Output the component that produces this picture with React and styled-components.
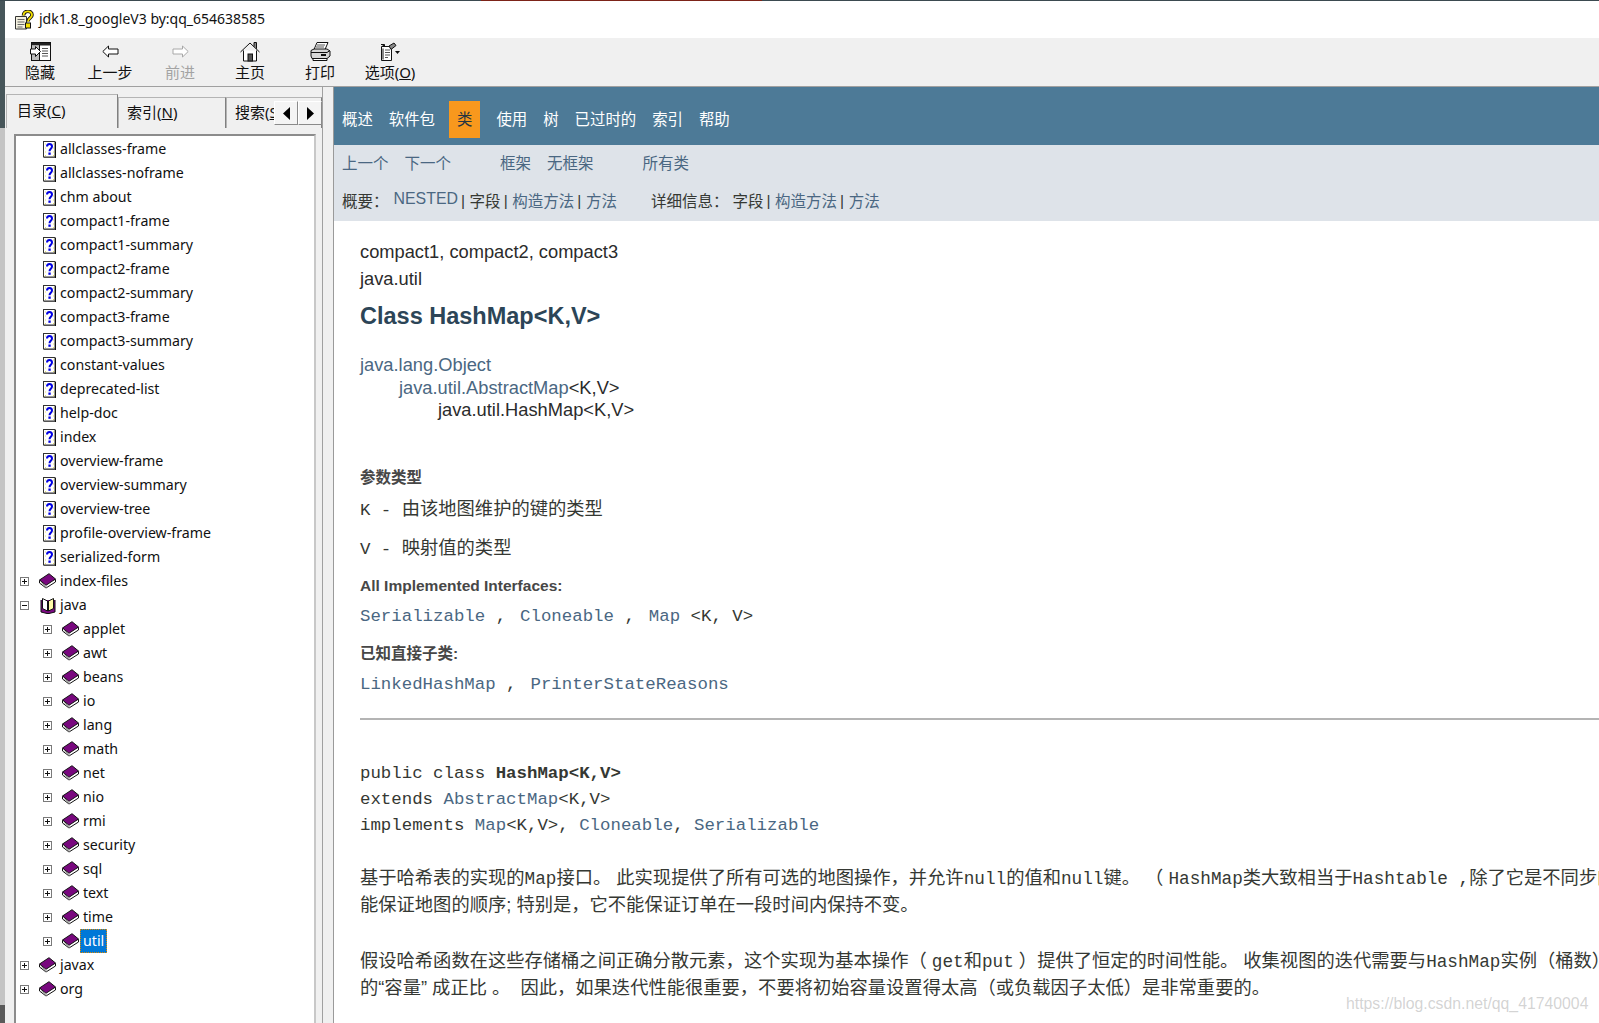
import React from 'react';
import styled, { createGlobalStyle } from 'styled-components';

const CJK = '"Noto Sans CJK SC"';

const GlobalStyle = createGlobalStyle`
  html, body {
    margin: 0;
    padding: 0;
    height: 100%;
    overflow: hidden;
  }
  body {
    font-family: "Noto Sans", ${CJK}, sans-serif;
    background: linear-gradient(to bottom, #47565a 0, #47565a 128px, #c4c4c4 128px, #c4c4c4 1005px, #5a5a5a 1005px);
  }
`;

const Page = styled.div`
  position: relative;
  width: 1599px;
  height: 1023px;
  padding-left: 5px;
  box-sizing: border-box;
  overflow: hidden;
  display: flex;
  flex-direction: column;
`;

const TopStrip = styled.div`
  height: 1px;
  flex: none;
  margin-left: -5px;
  background: linear-gradient(to right, #3b4a50 0, #3b4a50 481px, #7c2318 481px, #7c2318 762px, #3b4a50 762px);
`;

const TitleBar = styled.div`
  height: 37px;
  flex: none;
  display: flex;
  align-items: center;
  padding-left: 9px;
  background: #fff;
  font-size: 14px;
  color: #111;
`;

const TitleText = styled.span`
  margin: 0 0 3px 5px;
`;

const Toolbar = styled.div`
  height: 48px;
  flex: none;
  display: flex;
  padding-top: 3px;
  box-sizing: border-box;
  background: #f0f0f0;
`;

const ToolButton = styled.div`
  width: 70px;
  display: flex;
  flex-direction: column;
  align-items: center;
  color: ${(p) => (p.$disabled ? '#a3a3a3' : '#111')};
  font-size: 15px;
  line-height: 20px;
  white-space: nowrap;

  & > svg {
    height: 21px;
    flex: none;
  }
`;

const Divider = styled.div`
  height: 1px;
  flex: none;
  background: #a0a0a0;
`;

const Main = styled.div`
  flex: 1;
  min-height: 0;
  display: flex;
`;

const SidePane = styled.div`
  position: relative;
  width: 318px;
  flex: none;
  display: flex;
  flex-direction: column;
  background: #f0f0f0;
  padding: 7px 0 0 1px;
  box-sizing: border-box;
  border-right: 1px solid #a0a0a0;
`;

const TabStrip = styled.div`
  height: 34px;
  flex: none;
  display: flex;
  align-items: flex-end;
  overflow: hidden;
`;

const Tab = styled.div`
  width: ${(p) => p.$width}px;
  height: ${(p) => (p.$active ? 34 : 31)}px;
  flex: none;
  box-sizing: border-box;
  padding-left: ${(p) => (p.$active ? 10 : 8)}px;
  line-height: ${(p) => (p.$active ? 31 : 29)}px;
  font-size: 15px;
  color: #111;
  white-space: nowrap;
  overflow: hidden;
  border: 1px solid #b4b4b4;
  border-bottom: none;
  background: #f0f0f0;
  border-right: 1px solid #808080;
`;

const ScrollButtons = styled.div`
  position: absolute;
  left: 269px;
  top: 14px;
  display: flex;
`;

const ScrollButton = styled.div`
  width: 24px;
  height: 24px;
  box-sizing: border-box;
  display: flex;
  align-items: center;
  justify-content: center;
  background: #f4f4f4;
  border-right: 1px solid #8a8a8a;
  border-bottom: 1px solid #8a8a8a;
  border-top: 1px solid #fff;
  border-left: 1px solid #fff;
`;

const TreeBox = styled.div`
  flex: 1;
  min-height: 0;
  margin: 6px 6px 0 8px;
  background: #fff;
  border: 2px solid #8c8c8c;
  border-right-color: #c8c8c8;
  border-bottom: none;
  padding-top: 1px;
  overflow: hidden;
`;

const Row = styled.div`
  height: 24px;
  display: flex;
  align-items: center;
  padding-left: ${(p) => 4 + p.$depth * 23}px;
  font-size: 14.2px;
  color: #111;
`;

const Expander = styled.span`
  width: 7px;
  height: 7px;
  flex: none;
  margin-right: 10px;
  border: 1px solid #7a7a7a;
  display: flex;
  align-items: center;
  justify-content: center;
`;

const ExpanderSpacer = styled.span`
  width: 9px;
  flex: none;
  margin-right: 10px;
`;

const IconSlot = styled.span`
  width: 17px;
  height: 18px;
  flex: none;
  display: flex;
  align-items: center;
  justify-content: flex-end;
`;

const Label = styled.span`
  margin-left: 1px;
  padding: 0 2px;
  height: 24px;
  line-height: 22px;
  box-sizing: border-box;
  border: 1px dotted ${(p) => (p.$selected ? '#e08a00' : 'transparent')};
  background: ${(p) => (p.$selected ? '#0078d7' : 'transparent')};
  color: ${(p) => (p.$selected ? '#fff' : 'inherit')};
`;

const Splitter = styled.div`
  width: 10px;
  flex: none;
  background: #f0f0f0;
  border-right: 1px solid #9a9a9a;
`;

const Content = styled.div`
  flex: 1;
  min-width: 0;
  overflow: hidden;
  background: #fff;
  display: flex;
  flex-direction: column;
`;

const NavBar = styled.div`
  height: 58px;
  flex: none;
  display: flex;
  align-items: center;
  background: #4d7a97;
  padding-top: 6px;
  box-sizing: border-box;
  font-size: 15.4px;
  color: #fff;
`;

const NavItem = styled.div`
  height: 37px;
  line-height: 37px;
  padding: 0 8px;
  margin: ${(p) => (p.$active ? '0 8px 0 6px' : '0')};
  background: ${(p) => (p.$active ? '#f8981d' : 'transparent')};
  color: ${(p) => (p.$active ? '#253441' : '#fff')};
`;

const SubNav = styled.div`
  height: 76px;
  flex: none;
  background: #dee3e9;
  padding: 6px 0 0 8px;
  box-sizing: border-box;
  font-size: 15.5px;
  color: #4a6782;
`;

const SubRow = styled.div`
  height: 24px;
  line-height: 24px;
  display: flex;
  white-space: nowrap;
  margin-top: ${(p) => p.$top || 0}px;
`;

const SubLink = styled.span`
  margin-left: ${(p) => p.$left || 0}px;
  color: ${(p) => (p.$plain ? '#353833' : '#4a6782')};
`;

const Nested = styled(SubLink)`
  font-family: "Liberation Sans", sans-serif;
  font-size: 15.9px;
  position: relative;
  top: -2px;
`;

const Bar = styled.span`
  margin-left: 3px;
  margin-right: 4.6px;
  color: #353833;
  font-family: "Liberation Sans", sans-serif;
`;

const Article = styled.div`
  padding-left: 26px;
  color: #353833;
  font-family: "Liberation Sans", ${CJK}, sans-serif;
  white-space: nowrap;
`;

const SansLine = styled.div`
  font-size: 18.3px;
  line-height: 26.5px;
  margin-top: ${(p) => p.$top || 0}px;
  color: #2b2b2b;
`;

const ClassTitle = styled.h2`
  margin: 9px 0 0;
  font-size: 23.5px;
  line-height: 30px;
  font-weight: bold;
  color: #2c4557;
`;

const Ancestor = styled.div`
  font-size: 18.3px;
  line-height: 22.5px;
  margin-top: ${(p) => p.$top || 0}px;
  padding-left: ${(p) => p.$indent || 0}px;
  color: ${(p) => (p.$link ? '#4a6782' : '#2b2b2b')};

  & > span {
    color: #2b2b2b;
  }
`;

const Heading = styled.div`
  font-size: 15.5px;
  font-weight: bold;
  line-height: 20px;
  margin-top: ${(p) => p.$top || 0}px;
  color: #474747;
`;

const ParamLine = styled.div`
  font-size: 18.3px;
  line-height: 24px;
  margin-top: ${(p) => p.$top || 0}px;
  color: #353833;
`;

const Code = styled.span`
  font-family: "Liberation Mono", monospace;
  font-size: ${(p) => p.$size || 17.4}px;
  font-weight: ${(p) => (p.$bold ? 'bold' : 'normal')};
  margin-left: ${(p) => p.$gap || 0}px;
  color: ${(p) => (p.$link ? '#4a6782' : '#353833')};
  white-space: pre;
`;

const CodeLine = styled.div`
  font-family: "Liberation Mono", monospace;
  font-size: 17.4px;
  line-height: ${(p) => p.$height || 20}px;
  margin-top: ${(p) => p.$top || 0}px;
  white-space: pre;
`;

const Rule = styled.div`
  height: 2px;
  margin-top: 23px;
  background: #b4b4b4;
`;

const Paragraph = styled.div`
  margin-top: ${(p) => p.$top}px;
  font-size: 18.3px;
  line-height: 26.5px;
  color: #353833;
`;

const Watermark = styled.div`
  position: absolute;
  left: 1346px;
  top: 993px;
  font-family: "Liberation Sans", sans-serif;
  font-size: 15.8px;
  line-height: 22px;
  color: rgba(150, 150, 150, 0.42);
  white-space: nowrap;
`;

const DocIcon = () => (
  <svg width="13" height="17" viewBox="0 0 13 17">
    <rect x="0.5" y="0.5" width="11.5" height="15.5" fill="#fff" stroke="#333" />
    <path d="M12.5 1v16H1" fill="none" stroke="#111" />
    <path d="M2 3h.6M2 7h.6M2 11h.6M2 14.5h.6M10 3h.6M10 7h.6M10 11h.6M10 14.5h.6" stroke="#d8c800" />
    <path d="M4 5.500c0-3.400 5-3.400 5 0 0 2.300-2.500 2.200-2.500 4.800" fill="none" stroke="#0000e0" strokeWidth="2" />
    <rect x="5.400" y="11.500" width="2.300" height="2.300" fill="#0000e0" />
  </svg>
);

const BookIcon = () => (
  <svg width="17" height="16" viewBox="0 0 17 16">
    <path d="M.5 7.500V10L7 15l9.500-6V6.500z" fill="#fff" stroke="#111" />
    <path d="M.5 7 10 .7l6.500 5.300L7 12.300z" fill="#78087e" stroke="#111" />
    <path d="M2 9.500 7 13.500M7 12.500V15" stroke="#999" />
  </svg>
);

const OpenBookIcon = () => (
  <svg width="16" height="17" viewBox="0 0 16 17">
    <path d="M1 3v12l6 1.500h2l6-1.500V3" fill="#7b0a82" stroke="#111" />
    <path d="M2.500 1.500l5 2.500v10l-5-2.500z" fill="#fff" stroke="#111" />
    <path d="M13.500 1.500L8.500 4v10l5-2.500z" fill="#fff9a8" stroke="#111" />
  </svg>
);

const TitleIcon = () => (
  <svg width="20" height="20" viewBox="0 0 20 20">
    <path d="M1.500 6.500h11v12.500h-11z" fill="#f4f1e0" stroke="#333" />
    <path d="M3.500 9.500h7M3.500 12h7M3.500 14.500h7M3.500 17h5" stroke="#666" />
    <path d="M9.500 5.500c0-5.500 8.500-5.500 8.500-.5 0 3-4 3-4 6.500" fill="none" stroke="#111" strokeWidth="3.600" />
    <path d="M9.500 5.500c0-5.500 8.500-5.500 8.500-.5 0 3-4 3-4 6.500" fill="none" stroke="#f5e100" strokeWidth="1.800" />
    <rect x="11.500" y="13" width="5" height="5" fill="#f5e100" stroke="#111" />
  </svg>
);

const HideIcon = () => (
  <svg width="21" height="19" viewBox="0 0 21 19">
    <rect x="1.500" y="0.500" width="19" height="18" fill="#fff" stroke="#111" />
    <rect x="2" y="1" width="18" height="2.500" fill="#222" />
    <rect x="2" y="3.500" width="7" height="14.500" fill="#bdbdbd" />
    <path d="M9.500 3v15" stroke="#111" />
    <path d="M12 6.500h6M12 9h6M12 11.500h6M12 14h6" stroke="#555" />
    <path d="M.5 7h5V4.500l5 5-5 5V12h-5z" fill="#fff" stroke="#111" />
  </svg>
);

const ArrowIcon = ({ flip, color }) => (
  <svg width="17" height="13" viewBox="0 0 17 13" style={flip ? { transform: 'scaleX(-1)' } : undefined}>
    <path d="M.8 6.500 6.500 1v3h9.500v5H6.500v3z" fill="#fff" stroke={color} />
  </svg>
);

const HomeIcon = () => (
  <svg width="20" height="20" viewBox="0 0 20 20">
    <path d="M14 5V1h2.500v6.300" fill="#888" stroke="#111" />
    <path d="M.5 10.500 10 1.500l9.500 9" fill="none" stroke="#111" />
    <path d="M3.500 9v10.500h13V9" fill="#fff" stroke="#111" />
    <rect x="8" y="12.500" width="4.500" height="7" fill="#555" stroke="#111" />
  </svg>
);

const PrintIcon = () => (
  <svg width="21" height="19" viewBox="0 0 21 19">
    <path d="M7 .5h11l-3 7H4z" fill="#fff" stroke="#111" />
    <path d="M7 3h8M6 5h8" stroke="#555" />
    <path d="M1 8.500 4 7h13l3 2v5l-3 2.500H2L1 14z" fill="#d8d8d8" stroke="#111" />
    <path d="M1 10.500h16l3-2" fill="none" stroke="#111" />
    <path d="M3 16.500h14v2H3z" fill="#fff" stroke="#111" />
    <path d="M11 13h5" stroke="#111" strokeWidth="2" />
  </svg>
);

const OptionsIcon = () => (
  <svg width="21" height="19" viewBox="0 0 21 19">
    <path d="M1.500 4.500h10v14h-10z" fill="#fff" stroke="#111" />
    <path d="M1 2.500h3.500v2M3 6.500v11" stroke="#111" />
    <path d="M5 8h5M5 10.500h5M5 13h5M5 15.500h3" stroke="#555" />
    <path d="M9 4l5-3 2 2.500-5 4z" fill="#888" stroke="#111" />
    <path d="M15 9h5l-2.500 3z" fill="#111" />
  </svg>
);

const Triangle = ({ right }) => (
  <svg width="7" height="13" viewBox="0 0 7 13" style={right ? { transform: 'scaleX(-1)' } : undefined}>
    <path d="M7 0v13L0 6.500z" fill="#000" />
  </svg>
);

const toolItems = [
  { label: '隐藏', icon: <HideIcon /> },
  { label: '上一步', icon: <ArrowIcon color="#111" /> },
  { label: '前进', icon: <ArrowIcon flip color="#a8a8a8" />, disabled: true },
  { label: '主页', icon: <HomeIcon /> },
  { label: '打印', icon: <PrintIcon /> },
  { label: <>选项(<u>O</u>)</>, icon: <OptionsIcon /> },
];

const docs = [
  'allclasses-frame', 'allclasses-noframe', 'chm about', 'compact1-frame', 'compact1-summary',
  'compact2-frame', 'compact2-summary', 'compact3-frame', 'compact3-summary', 'constant-values',
  'deprecated-list', 'help-doc', 'index', 'overview-frame', 'overview-summary', 'overview-tree',
  'profile-overview-frame', 'serialized-form',
];

const javaPackages = ['applet', 'awt', 'beans', 'io', 'lang', 'math', 'net', 'nio', 'rmi', 'security', 'sql', 'text', 'time', 'util'];

const navItems = ['概述', '软件包', '类', '使用', '树', '已过时的', '索引', '帮助'];

const PlusMinus = ({ open }) => (
  <Expander>
    <svg width="7" height="7" viewBox="0 0 7 7">
      <path d={open ? 'M1 3.500h5' : 'M1 3.500h5M3.500 1v5'} stroke="#111" />
    </svg>
  </Expander>
);

const TreeRow = ({ depth = 0, kind, label, selected }) => (
  <Row $depth={depth}>
    {kind === 'doc' ? <ExpanderSpacer /> : <PlusMinus open={kind === 'open'} />}
    <IconSlot>
      {kind === 'doc' && <DocIcon />}
      {kind === 'book' && <BookIcon />}
      {kind === 'open' && <OpenBookIcon />}
    </IconSlot>
    <Label $selected={selected}>{label}</Label>
  </Row>
);

const App = () => (
  <Page>
    <GlobalStyle />
    <TopStrip />
    <TitleBar>
      <TitleIcon />
      <TitleText>jdk1.8_googleV3 by:qq_654638585</TitleText>
    </TitleBar>
    <Toolbar>
      {toolItems.map((item, i) => (
        <ToolButton key={i} $disabled={item.disabled}>
          {item.icon}
          <span>{item.label}</span>
        </ToolButton>
      ))}
    </Toolbar>
    <Divider />
    <Main>
      <SidePane>
        <TabStrip>
          <Tab $active $width={112}>目录(<u>C</u>)</Tab>
          <Tab $width={108}>索引(<u>N</u>)</Tab>
          <Tab $width={96}>搜索(<u>S</u>)</Tab>
        </TabStrip>
        <ScrollButtons>
          <ScrollButton><Triangle /></ScrollButton>
          <ScrollButton><Triangle right /></ScrollButton>
        </ScrollButtons>
        <TreeBox>
          {docs.map((d) => <TreeRow key={d} kind="doc" label={d} />)}
          <TreeRow kind="book" label="index-files" />
          <TreeRow kind="open" label="java" />
          {javaPackages.map((p) => (
            <TreeRow key={p} depth={1} kind="book" label={p} selected={p === 'util'} />
          ))}
          <TreeRow kind="book" label="javax" />
          <TreeRow kind="book" label="org" />
        </TreeBox>
      </SidePane>
      <Splitter />
      <Content>
        <NavBar>
          {navItems.map((n) => <NavItem key={n} $active={n === '类'}>{n}</NavItem>)}
        </NavBar>
        <SubNav>
          <SubRow>
            <SubLink>上一个</SubLink>
            <SubLink $left={16}>下一个</SubLink>
            <SubLink $left={49}>框架</SubLink>
            <SubLink $left={16}>无框架</SubLink>
            <SubLink $left={49}>所有类</SubLink>
          </SubRow>
          <SubRow $top={14}>
            <SubLink $plain>概要：</SubLink>
            <Nested $left={5}>NESTED</Nested>
            <Bar>|</Bar>
            <SubLink $plain>字段</SubLink>
            <Bar>|</Bar>
            <SubLink>构造方法</SubLink>
            <Bar>|</Bar>
            <SubLink>方法</SubLink>
            <SubLink $plain $left={34}>详细信息：</SubLink>
            <SubLink $plain $left={4}>字段</SubLink>
            <Bar>|</Bar>
            <SubLink>构造方法</SubLink>
            <Bar>|</Bar>
            <SubLink>方法</SubLink>
          </SubRow>
        </SubNav>
        <Article>
          <SansLine $top={18}>compact1, compact2, compact3</SansLine>
          <SansLine>java.util</SansLine>
          <ClassTitle>Class HashMap&lt;K,V&gt;</ClassTitle>
          <Ancestor $top={23} $link>java.lang.Object</Ancestor>
          <Ancestor $indent={39} $link>java.util.AbstractMap<span>&lt;K,V&gt;</span></Ancestor>
          <Ancestor $indent={78}>java.util.HashMap&lt;K,V&gt;</Ancestor>
          <Heading $top={46}>参数类型</Heading>
          <ParamLine $top={9}><Code>K - </Code>由该地图维护的键的类型</ParamLine>
          <ParamLine $top={13}><Code>V - </Code>映射值的类型</ParamLine>
          <Heading $top={14}>All Implemented Interfaces:</Heading>
          <CodeLine $top={11}>
            <Code $link>Serializable</Code><Code> , </Code><Code $link $gap={3.5}>Cloneable</Code><Code> , </Code><Code $link $gap={3.5}>Map</Code><Code> &lt;K, V&gt;</Code>
          </CodeLine>
          <Heading $top={17}>已知直接子类:</Heading>
          <CodeLine $top={11}>
            <Code $link>LinkedHashMap</Code><Code> , </Code><Code $link $gap={3.5}>PrinterStateReasons</Code>
          </CodeLine>
          <Rule />
          <CodeLine $top={41} $height={26}>
            <Code>public class </Code><Code $bold>HashMap&lt;K,V&gt;</Code>
          </CodeLine>
          <CodeLine $height={26}>
            <Code>extends </Code><Code $link>AbstractMap</Code><Code>&lt;K,V&gt;</Code>
          </CodeLine>
          <CodeLine $height={26}>
            <Code>implements </Code><Code $link>Map</Code><Code>&lt;K,V&gt;, </Code><Code $link>Cloneable</Code><Code>, </Code><Code $link>Serializable</Code>
          </CodeLine>
          <Paragraph $top={26}>
            <div>基于哈希表的实现的<Code $size={17.7}>Map</Code>接口。 此实现提供了所有可选的地图操作，并允许<Code $size={17.7}>null</Code>的值和<Code $size={17.7}>null</Code>键。 （ <Code $size={17.7}>HashMap</Code>类大致相当于<Code $size={17.7}>Hashtable ,</Code>除了它是不同步的</div>
            <div>能保证地图的顺序; 特别是，它不能保证订单在一段时间内保持不变。</div>
          </Paragraph>
          <Paragraph $top={29}>
            <div>假设哈希函数在这些存储桶之间正确分散元素，这个实现为基本操作（ <Code $size={17.7}>get</Code>和<Code $size={17.7}>put</Code> ）提供了恒定的时间性能。 收集视图的迭代需要与<Code $size={17.7}>HashMap</Code>实例（桶数）</div>
            <div>的“容量” 成正比 。&nbsp; 因此，如果迭代性能很重要，不要将初始容量设置得太高（或负载因子太低）是非常重要的。</div>
          </Paragraph>
        </Article>
      </Content>
    </Main>
    <Watermark>https://blog.csdn.net/qq_41740004</Watermark>
  </Page>
);

export default App;
